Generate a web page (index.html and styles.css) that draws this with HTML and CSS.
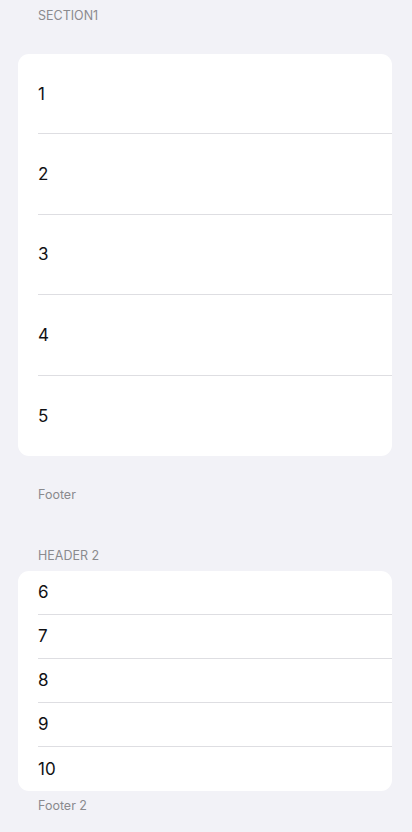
FILE: index.html
```html
<!DOCTYPE html>
<html lang="en">
<head>
<meta charset="utf-8">
<link rel="stylesheet" href="styles.css">
</head>
<body>
<main class="list">
  <section class="group group-first">
    <div class="caption header">SECTION1</div>
    <div class="card card-tall">
      <div class="row"><div class="row-inner">1</div></div>
      <div class="row"><div class="row-inner">2</div></div>
      <div class="row"><div class="row-inner">3</div></div>
      <div class="row"><div class="row-inner">4</div></div>
      <div class="row"><div class="row-inner">5</div></div>
    </div>
    <div class="caption footer">Footer</div>
  </section>
  <section class="group group-second">
    <div class="caption header">HEADER 2</div>
    <div class="card card-short">
      <div class="row"><div class="row-inner">6</div></div>
      <div class="row"><div class="row-inner">7</div></div>
      <div class="row"><div class="row-inner">8</div></div>
      <div class="row"><div class="row-inner">9</div></div>
      <div class="row"><div class="row-inner">10</div></div>
    </div>
    <div class="caption footer footer-tight">Footer 2</div>
  </section>
</main>
</body>
</html>
```

FILE: styles.css
```css
html, body {
  margin: 0;
  padding: 0;
  background: #f2f2f7;
}
body {
  font-family: Inter, "Noto Sans", "Liberation Sans", sans-serif;
  color: #111114;
  height: 832px;
  overflow: hidden;
}
.list {
  display: flex;
  flex-direction: column;
  padding: 8px 20px 0 18px;
}
.group {
  display: flex;
  flex-direction: column;
}
.caption {
  font-size: 12.5px;
  line-height: 16px;
  color: #8a8a8e;
  padding-left: 20px;
}
.header {
  text-transform: uppercase;
}
.group-first .header {
  margin-bottom: 30px;
}
.group-first .footer {
  margin-top: 31px;
}
.group-second {
  margin-top: 45px;
}
.group-second .header {
  margin-bottom: 7px;
}
.footer-tight {
  margin-top: 7px;
}
.card {
  background: #ffffff;
  border-radius: 11px;
  overflow: hidden;
  display: flex;
  flex-direction: column;
}
.row {
  padding-left: 20px;
}
.row-inner {
  display: flex;
  align-items: center;
  font-size: 17px;
  border-bottom: 1px solid #dedee2;
  box-sizing: border-box;
}
.row:last-child .row-inner {
  border-bottom: none;
}
.card-tall .row-inner {
  height: 80.4px;
}
.card-short .row-inner {
  height: 44px;
}
```
